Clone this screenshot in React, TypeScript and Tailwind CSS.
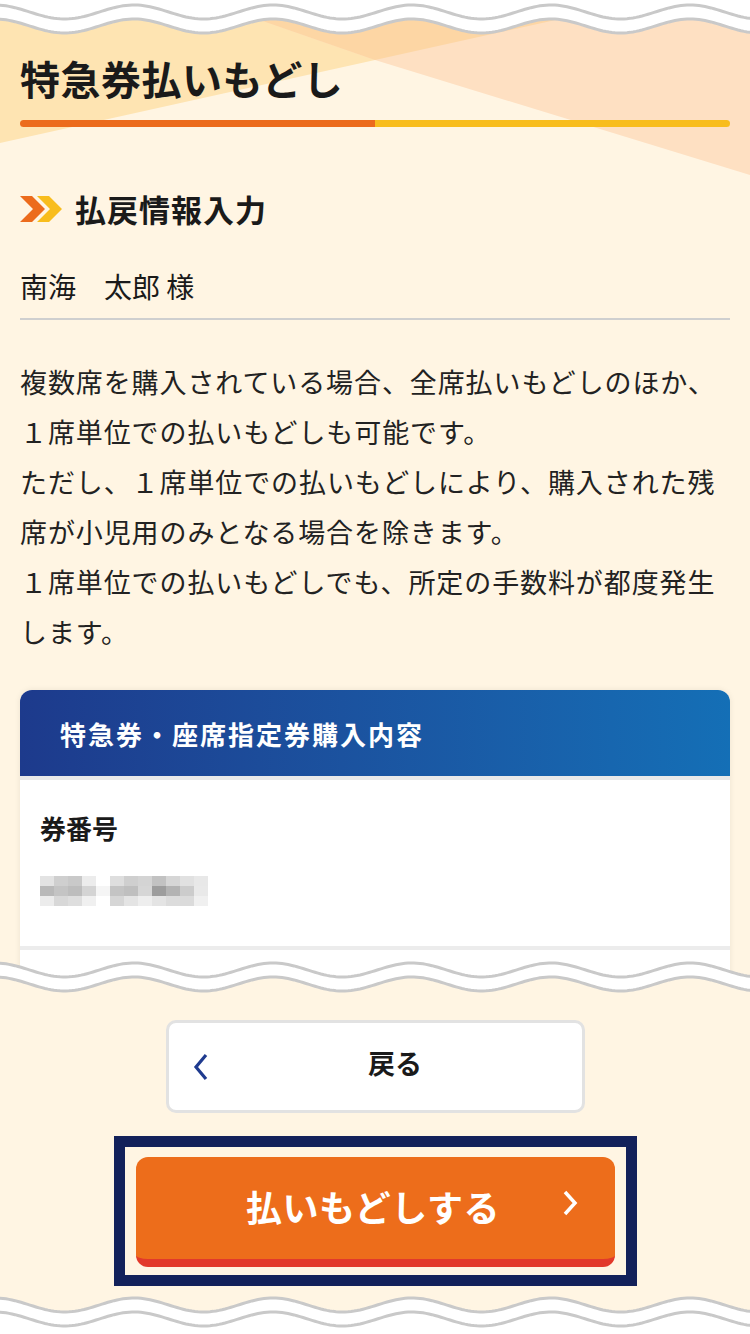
import React from 'react';

const FONT = '"Noto Sans CJK JP", "Noto Sans", sans-serif';

function wave(c: number, a: number, from: number, to: number) {
  const pts: string[] = [];
  const step = from < to ? 3 : -3;
  for (let x = from; step > 0 ? x <= to : x >= to; x += step) {
    const y = c - a * Math.cos((2 * Math.PI * (x - 134)) / 139);
    pts.push(`${x},${y.toFixed(2)}`);
  }
  return pts;
}

function Wave({ top, mode }: { top: number; mode: 'top' | 'mid' | 'bottom' }) {
  const upper = wave(top, 7, -3, 753);
  const lower = wave(top + 14, 7, -3, 753);
  const lowerBack = wave(top + 14, 7, 753, -3);
  let fill = '';
  if (mode === 'top') fill = `M-3,0 L753,0 L${lowerBack.join(' L')} Z`;
  if (mode === 'mid') fill = `M${upper.join(' L')} L${lowerBack.join(' L')} Z`;
  if (mode === 'bottom') fill = `M${upper.join(' L')} L753,60 L-3,60 Z`;
  return (
    <svg width="750" height="45" viewBox="0 0 750 45" className="block">
      {mode === 'mid' && (
        <path d={`M${lower.join(' L')} L753,45 L-3,45 Z`} fill="#fff5e3" />
      )}
      <path d={fill} fill="#ffffff" />
      <path d={`M${upper.join(' L')}`} fill="none" stroke="#c9c9c9" strokeWidth="3" />
      <path d={`M${lower.join(' L')}`} fill="none" stroke="#c9c9c9" strokeWidth="3" />
    </svg>
  );
}

const BLUR: string[][] = [
  ['bg-[#e3e3e3]', 'bg-[#cfcfcf]', 'bg-[#c9c9c9]', 'bg-[#ececec]', 'bg-white', 'bg-[#dedede]', 'bg-[#cfcfcf]', 'bg-[#d4d4d4]', 'bg-[#c2c2c2]', 'bg-[#d6d6d6]', 'bg-[#e1e1e1]', 'bg-[#e8e8e8]'],
  ['bg-[#b9b9b9]', 'bg-[#c4c4c4]', 'bg-[#bdbdbd]', 'bg-[#d4d4d4]', 'bg-[#f5f5f5]', 'bg-[#c4c4c4]', 'bg-[#bfbfbf]', 'bg-[#d6d6d6]', 'bg-[#9d9d9d]', 'bg-[#b3b3b3]', 'bg-[#cccccc]', 'bg-[#e9e9e9]'],
  ['bg-[#ececec]', 'bg-[#d8d8d8]', 'bg-[#dedede]', 'bg-[#f0f0f0]', 'bg-white', 'bg-[#d6d6d6]', 'bg-[#e4e4e4]', 'bg-[#eeeeee]', 'bg-[#e4e4e4]', 'bg-[#dcdcdc]', 'bg-[#dbdbdb]', 'bg-[#f0f0f0]'],
];

export default function App() {
  return (
    <div className="w-[750px] h-[1334px] overflow-hidden bg-[#fff5e3] text-[#1a1a1a] flex flex-col" style={{ fontFamily: FONT }}>
      {/* main page area, cut by the wave */}
      <div className="relative h-[995px] shrink-0 overflow-hidden">
        <svg className="absolute inset-0" width="750" height="260" viewBox="0 0 750 260">
          <polygon points="0,0 646,0 375,60 0,143" fill="#fee4b2" />
          <polygon points="202,0 750,0 750,175 375,60" fill="#fee0c2" />
          <polygon points="202,0 646,0 375,60" fill="#fdd6a4" />
        </svg>
        <div className="absolute top-0 left-0">
          <Wave top={12} mode="top" />
        </div>

        <div className="relative px-5 pt-[54px] flex flex-col">
          <h1 className="h-[48px] leading-[48px] text-[40px] font-bold tracking-[0.5px]">特急券払いもどし</h1>
          <div className="mt-[18px] h-[7px] flex rounded-full overflow-hidden">
            <div className="w-1/2 bg-[#ec6b1c]" />
            <div className="w-1/2 bg-[#f8bd1d]" />
          </div>

          <div className="mt-[62px] h-[40px] flex items-center gap-[13px]">
            <svg width="42" height="26" viewBox="0 0 42 26">
              <polygon points="0,0 12,0 25,13 12,26 0,26 13,13" fill="#ec6b1c" />
              <polygon points="17,0 29,0 42,13 29,26 17,26 30,13" fill="#f8bd1d" />
            </svg>
            <h2 className="text-[31px] font-bold leading-[40px] tracking-[1px]">払戻情報入力</h2>
          </div>

          <div className="mt-[37px] h-[40px] leading-[40px] text-[28px]">南海　太郎 様</div>
          <div className="mt-[12px] h-[2px] bg-[#cfcfcf]" />

          <div className="mt-[37px] text-[27px] leading-[50px] tracking-[0.9px] whitespace-nowrap text-[#222]">
            <div>複数席を購入されている場合、全席払いもどしのほか、</div>
            <div>１席単位での払いもどしも可能です。</div>
            <div>ただし、１席単位での払いもどしにより、購入された残</div>
            <div>席が小児用のみとなる場合を除きます。</div>
            <div>１席単位での払いもどしでも、所定の手数料が都度発生</div>
            <div>します。</div>
          </div>

          <div className="mt-[33px] rounded-t-[12px] overflow-hidden bg-white shadow-[0_0_6px_rgba(0,0,0,0.08)]">
            <div className="h-[86px] flex items-center pl-[40px] bg-gradient-to-r from-[#1d3a8c] to-[#146fb6]">
              <h3 className="text-white text-[26px] font-bold tracking-[2px]">特急券・座席指定券購入内容</h3>
            </div>
            <div className="h-[4px] bg-[#e9e9e9]" />
            <div className="px-5 pt-[28px] h-[166px]">
              <div className="h-[40px] leading-[40px] text-[26px] font-bold">券番号</div>
              <div className="mt-[28px] flex flex-col w-[170px]">
                {BLUR.map((row, r) => (
                  <div key={r} className="flex">
                    {row.map((c, i) => (
                      <div key={i} className={`h-[10px] w-[14px] ${c}`} />
                    ))}
                  </div>
                ))}
              </div>
            </div>
            <div className="h-[4px] bg-[#ececec]" />
            <div className="h-[60px]" />
          </div>
        </div>

        <div className="absolute bottom-0 left-0">
          <Wave top={20} mode="mid" />
        </div>
      </div>

      {/* footer with buttons */}
      <div className="relative flex-1 flex flex-col items-center">
        <button className="mt-[25px] w-[419px] h-[93px] rounded-[10px] border-[3px] border-[#e2e2e2] bg-white relative flex items-center justify-center pl-[40px] pb-[6px]">
          <svg className="absolute left-[24px] top-[30px]" width="16" height="28" viewBox="0 0 16 28">
            <path d="M13 2 L3 14 L13 26" fill="none" stroke="#1f3b8f" strokeWidth="3.2" />
          </svg>
          <span className="text-[27px] font-bold">戻る</span>
        </button>

        <div className="mt-[23px] w-[523px] h-[150px] border-[11px] border-[#13215a] px-[11px] pt-[10px] pb-[8px]">
          <button className="w-full h-full rounded-[12px] bg-[#ed6d1b] border-b-[8px] border-[#e2392b] relative flex items-center justify-center pb-[4px]">
            <span className="text-white text-[36px] font-bold tracking-[0.5px] pr-[4px]">払いもどしする</span>
            <svg className="absolute right-[36px] top-[32px]" width="18" height="28" viewBox="0 0 18 28">
              <path d="M4 3 L14 14 L4 25" fill="none" stroke="#ffffff" strokeWidth="3.5" />
            </svg>
          </button>
        </div>

        <div className="absolute bottom-0 left-0">
          <Wave top={16} mode="bottom" />
        </div>
      </div>
    </div>
  );
}
